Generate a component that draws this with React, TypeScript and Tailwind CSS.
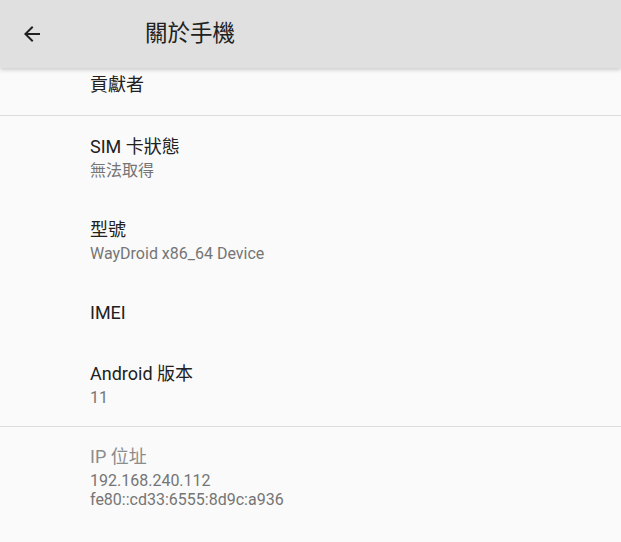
const font = { fontFamily: 'Roboto, "Noto Sans CJK TC", sans-serif' };

type Item = { title: string; summary?: string[]; disabled?: boolean };

const items: Item[] = [
  { title: "SIM 卡狀態", summary: ["無法取得"] },
  { title: "型號", summary: ["WayDroid x86_64 Device"] },
  { title: "IMEI" },
  { title: "Android 版本", summary: ["11"] },
  { title: "IP 位址", summary: ["192.168.240.112", "fe80::cd33:6555:8d9c:a936"], disabled: true },
];

function Row({ item }: { item: Item }) {
  return (
    <div className="pl-[90px] pr-4 pt-[19px] pb-[18px]">
      <div
        className={`text-[18px] leading-[24px] ${
          item.disabled ? "text-[#8c8c8c]" : "text-[#212121]"
        }`}
      >
        {item.title}
      </div>
      {item.summary && (
        <div className="pt-[2px] pb-[1px] text-[16px] leading-[19px] text-[#757575]">
          {item.summary.map((line) => (
            <div key={line}>{line}</div>
          ))}
        </div>
      )}
    </div>
  );
}

export default function App() {
  return (
    <div className="w-[621px] h-[542px] overflow-hidden bg-[#fafafa]" style={font}>
      <header className="relative z-10 h-[68px] flex items-center bg-[#e0e0e0] shadow-[0_2px_4px_rgba(0,0,0,0.18)]">
        <svg className="ml-5 w-6 h-6 text-[#212121]" viewBox="0 0 24 24" fill="currentColor">
          <path d="M20 11H7.83l5.59-5.59L12 4l-8 8 8 8 1.41-1.41L7.83 13H20v-2z" />
        </svg>
        <h1 className="ml-[101px] text-[22.5px] text-[#212121]">關於手機</h1>
      </header>

      <div className="h-[47px] flex items-end pl-[90px] pb-[18px] text-[18px] leading-[24px] text-[#212121]">
        貢獻者
      </div>
      <div className="h-px bg-[#dcdcdc]" />

      {items.slice(0, 4).map((item) => (
        <Row key={item.title} item={item} />
      ))}

      <div className="h-px bg-[#dcdcdc]" />

      <div className="-mt-px">
        <Row item={items[4]} />
      </div>
    </div>
  );
}
